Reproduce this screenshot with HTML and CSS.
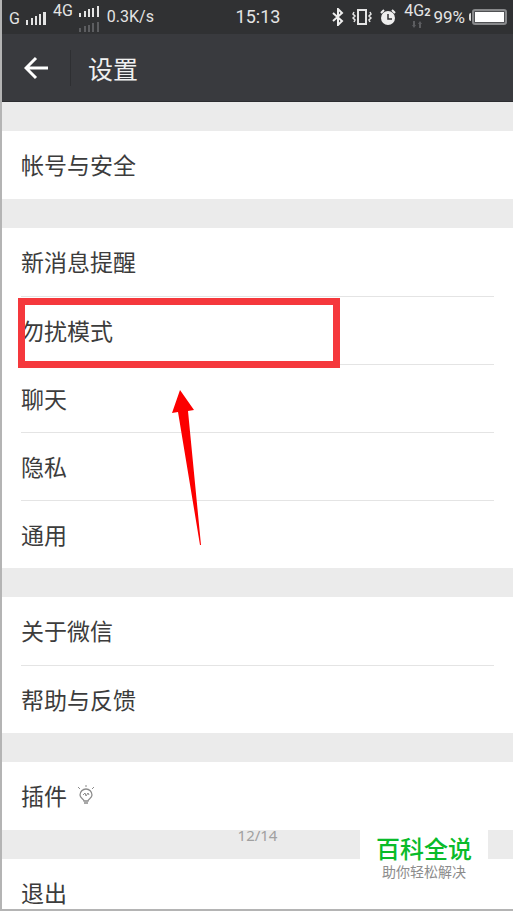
FILE: index.html
```html
<!DOCTYPE html>
<html lang="zh-CN">
<head>
    <meta charset="UTF-8">
    <meta name="viewport" content="width=device-width, initial-scale=1.0">
    <title>设置</title>
    <link rel="stylesheet" href="styles.css">
</head>
<body>
<div class="phone">

    <div class="status-bar">
        <div class="status-left">
            <span class="net-g">G</span>
            <svg class="signal" width="21" height="14" viewBox="0 0 21 14" fill="#e4e4e4">
                <path d="M0 8h2v5h-2zM5 6h2v7h-2zM9 4h2v9h-2zM13 2h2v11h-2zM17 0h3v13h-3z"/>
            </svg>
            <span class="net-4g">4G</span>
            <svg class="signal-dual" width="22" height="28" viewBox="0 0 22 28">
                <path fill="#e4e4e4" d="M0 8h2v4h-2zM5 6h2v6h-2zM9 4h2v8h-2zM13 3h2v9h-2zM18 1h2v11h-2z"/>
                <path fill="#5c5d60" d="M0 23h2v4h-2zM5 21h2v6h-2zM9 20h2v7h-2zM13 18h2v9h-2zM18 17h2v10h-2z"/>
            </svg>
            <span class="speed">0.3K/s</span>
        </div>
        <time class="clock">15:13</time>
        <div class="status-right">
            <svg width="12" height="18" viewBox="0 0 12 18" fill="none" stroke="#eee" stroke-width="2">
                <path d="M1 5l9 8-4 4V1l4 4-9 8"/>
            </svg>
            <svg width="20" height="16" viewBox="0 0 20 16" fill="none" stroke="#e4e4e4">
                <path stroke-width="2" d="M6 1h8v14H6z"/>
                <path stroke-width="1.5" d="M2 3l-1 2 2 2-2 2 2 2-1 2M18 3l1 2-2 2 2 2-2 2 1 2"/>
            </svg>
            <svg width="16" height="16" viewBox="0 0 16 16">
                <circle cx="8" cy="9" r="7" fill="#eee"/>
                <path d="M1 4l3-3M15 4l-3-3" stroke="#eee" stroke-width="2"/>
                <path d="M8 5v5h4" fill="none" stroke="#303133" stroke-width="1.5"/>
            </svg>
            <div class="net-data">
                <span>4G<b>2</b></span>
                <svg width="12" height="7" viewBox="0 0 12 7" fill="#5c5d60">
                    <path d="M2 0h2v4h1l-2 3-2-3h1zM8 7h2V3h1L9 0 7 3h1z"/>
                </svg>
            </div>
            <span class="percent">99%</span>
            <svg width="38" height="16" viewBox="0 0 38 16">
                <rect x="4" y="1" width="33" height="14" rx="2" fill="#505154" stroke="#88898b" stroke-width="2"/>
                <path d="M0 6q0-2 2-2v8q-2 0-2-2z" fill="#ddd"/>
                <path d="M6 3h29v10H6z" fill="#fff"/>
            </svg>
        </div>
    </div>

    <header class="title-bar">
        <button class="back" type="button" aria-label="返回">
            <svg width="24" height="24" viewBox="0 0 24 24" fill="none" stroke="#fff" stroke-width="3">
                <path d="M12 2L2 12l10 10M2 12h22"/>
            </svg>
        </button>
        <h1>设置</h1>
    </header>

    <main class="settings">
        <ul class="group">
            <li><a href="#">帐号与安全</a></li>
        </ul>
        <ul class="group">
            <li><a href="#">新消息提醒</a></li>
            <li class="marked">
                <a href="#">勿扰模式</a>
                <span class="mark-box"></span>
                <svg class="mark-arrow" width="30" height="156" viewBox="0 0 30 156">
                    <path fill="#fc0000" d="M8 0L22 20l-6 1L29 155h-1L6 22l-6 1z"/>
                </svg>
            </li>
            <li><a href="#">聊天</a></li>
            <li><a href="#">隐私</a></li>
            <li><a href="#">通用</a></li>
        </ul>
        <ul class="group">
            <li><a href="#">关于微信</a></li>
            <li><a href="#">帮助与反馈</a></li>
        </ul>
        <ul class="group">
            <li>
                <a href="#">插件
                    <svg width="18" height="20" viewBox="0 0 18 20" fill="none" stroke="#8c8c8c">
                        <path stroke-width="1.3" d="M7 16c0-2-4-3-4-6a6 6 0 0 1 12 0c0 3-4 4-4 6zM7 18h4"/>
                        <path d="M6 10l2-2 1 3 2-3 1 2M9 0v2M1 2l2 2M17 2l-2 2"/>
                    </svg>
                </a>
            </li>
        </ul>
        <ul class="group">
            <li><a href="#">退出</a></li>
        </ul>
    </main>

    <span class="page-number">12/14</span>
    <div class="watermark">
        <strong>百科全说</strong>
        <span>助你轻松解决</span>
    </div>

</div>
</body>
</html>
```
FILE: styles.css
```css
* {
    box-sizing: border-box;
}
body {
    margin: 0;
    font-family: Roboto, "Noto Sans CJK SC", sans-serif;
    color: #3c3c3c;
    background-color: #ebebeb;
}
svg {
    display: block;
    flex: none;
}
.phone {
    position: relative;
    height: 100vh;
    overflow: hidden;
    border-left: 2px solid #b4b4b4;
    border-bottom: 2px solid #b4b4b4;
}

/* status bar */
.status-bar {
    display: grid;
    grid-template-columns: 1fr auto 1fr;
    align-items: center;
    height: 34px;
    padding: 0 6px 0 7px;
    background-color: #303133;
    color: #e4e4e4;
    font-size: 16px;
    line-height: 20px;
}
.status-left,
.status-right {
    display: flex;
    align-items: center;
}
.status-left {
    gap: 6px;
}
.status-right {
    justify-content: flex-end;
    gap: 8px;
}
.net-g {
    padding-top: 4px;
}
.signal {
    margin-top: 3px;
}
.net-4g {
    margin-bottom: 12px;
}
.net-4g,
.net-data {
    line-height: 16px;
}
.signal-dual {
    margin-top: 4px;
}
.clock {
    font-size: 18px;
}
.net-data {
    display: flex;
    flex-direction: column;
    align-items: center;
    padding-bottom: 3px;
}
.net-data b {
    font-size: 11px;
}
.percent {
    margin-left: -5px;
    margin-right: -4px;
    font-size: 17px;
}

/* title bar */
.title-bar {
    display: flex;
    align-items: center;
    height: 68px;
    background-color: #393a3e;
    border-bottom: 1px solid #2c2d30;
}
.back {
    height: 36px;
    padding: 0 22px;
    border: 0;
    border-right: 1px solid #2e2f32;
    background: none;
}
.title-bar h1 {
    margin: 0 0 0 17px;
    font-size: 25px;
    font-weight: 400;
    color: #f0f0f0;
}

/* list */
.group {
    list-style: none;
    margin: 29px 0 0;
    padding: 0 19px;
    background-color: #fff;
}
.group li {
    position: relative;
}
.group li + li {
    border-top: 1px solid #e4e4e4;
}
.group a {
    display: flex;
    align-items: center;
    gap: 10px;
    height: 68px;
    padding-bottom: 2px;
    font-size: 23px;
    color: inherit;
    text-decoration: none;
}
.group li + li a {
    height: 67px;
}

.mark-box {
    position: absolute;
    top: 1px;
    left: -3px;
    width: 322px;
    height: 70px;
    border: 7px solid #f5383c;
    z-index: 1;
}
.mark-arrow {
    position: absolute;
    top: 93px;
    left: 151px;
    z-index: 1;
}

.page-number {
    position: absolute;
    bottom: 64px;
    left: 0;
    right: 0;
    text-align: center;
    font-family: "Noto Sans", sans-serif;
    font-size: 15px;
    line-height: 20px;
    color: #a0a0a0;
}
.watermark {
    position: absolute;
    right: 25px;
    bottom: 20px;
    display: flex;
    flex-direction: column;
    align-items: center;
    width: 128px;
    padding: 8px 0;
    background-color: #fff;
}
.watermark strong {
    font-size: 24px;
    font-weight: 500;
    line-height: 26px;
    color: #09bb2a;
}
.watermark span {
    font-size: 14px;
    line-height: 18px;
    color: #8c8c8c;
}
```
